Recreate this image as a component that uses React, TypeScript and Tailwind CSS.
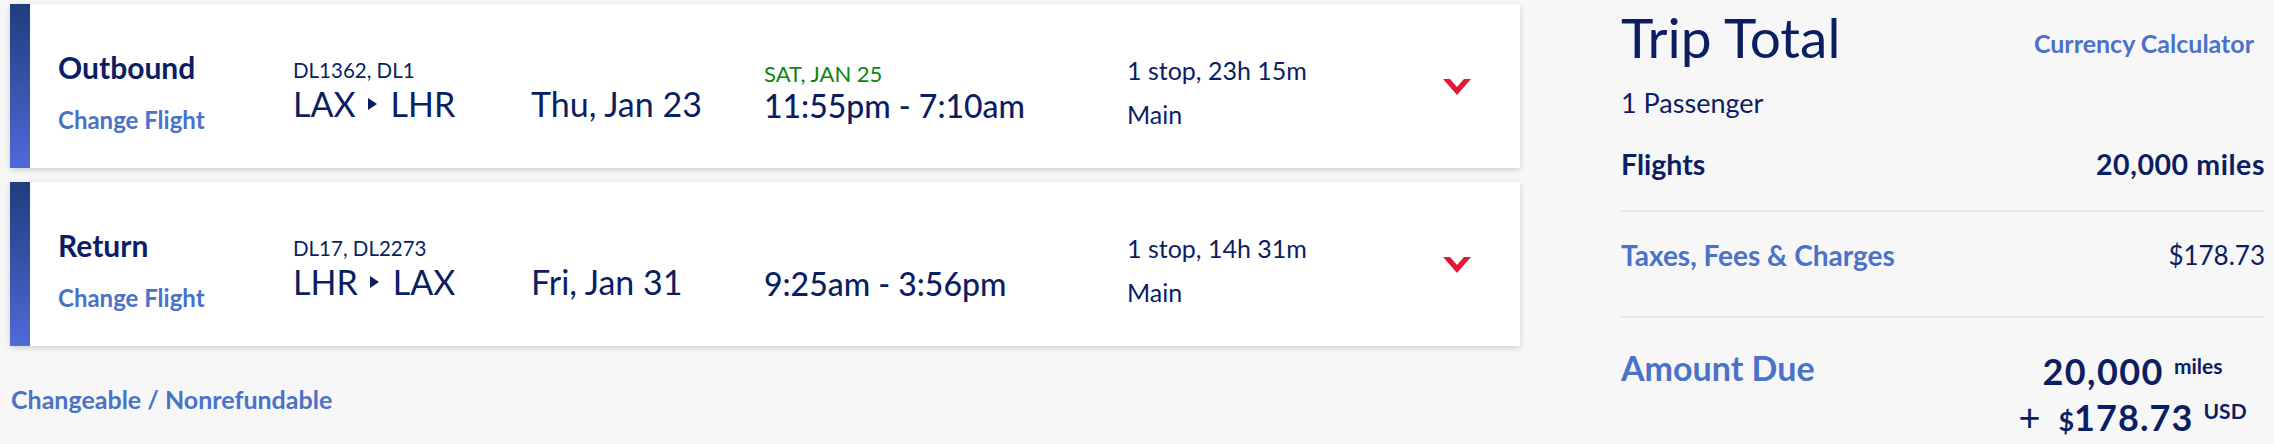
import React from "react";

const NAVY = "text-[#0b1e62]";

function Chevron() {
  return (
    <svg width="28" height="16" viewBox="0 0 28 16" className="block">
      <polygon points="0,0 7,0 14,8 21,0 28,0 14,16" fill="#e31837" />
    </svg>
  );
}

function Arrow() {
  return (
    <svg width="9" height="12" viewBox="0 0 9 12" className="block mx-[12px]">
      <polygon points="0,0 9,6 0,12" fill="#0b1e62" />
    </svg>
  );
}

type Leg = {
  label: string;
  codes: string;
  from: string;
  to: string;
  date: string;
  arrival?: string;
  time: string;
  stops: string;
};

function FlightCard({ leg }: { leg: Leg }) {
  return (
    <div className="flex h-[164px] bg-white shadow-[0_2px_6px_rgba(0,0,0,0.16)]">
      <div className="w-[20px] bg-linear-to-b from-[#1f3e7d] to-[#5069da]" />
      <div className="flex pl-[28px]">
        <div className="w-[235px] flex flex-col pt-[45px]">
          <div className={`text-[30px] leading-[36px] font-bold ${NAVY}`}>{leg.label}</div>
          <div className="mt-[20px] text-[24px] leading-[30px] font-bold text-[#4a72c8]">Change Flight</div>
        </div>
        <div className="w-[238px] flex flex-col pt-[54px]">
          <div className={`text-[20.5px] leading-[24px] ${NAVY}`}>{leg.codes}</div>
          <div className={`mt-[2px] flex items-center text-[34px] leading-[40px] ${NAVY}`}>
            <span>{leg.from}</span>
            <Arrow />
            <span className="ml-[2px]">{leg.to}</span>
          </div>
        </div>
        <div className={`w-[233px] pt-[80px] text-[34px] leading-[40px] ${NAVY}`}>{leg.date}</div>
        <div className="w-[363px] flex flex-col pt-[57px]">
          <div className="h-[26px] text-[22px] leading-[26px] text-[#0a870a]">{leg.arrival ?? ""}</div>
          <div className={`text-[32px] leading-[38px] font-medium ${NAVY}`}>{leg.time}</div>
        </div>
        <div className="w-[316px] flex flex-col pt-[51px]">
          <div className={`text-[25px] leading-[30px] ${NAVY}`}>{leg.stops}</div>
          <div className={`mt-[14px] text-[25px] leading-[30px] ${NAVY}`}>Main</div>
        </div>
        <div className="pt-[75px]">
          <Chevron />
        </div>
      </div>
    </div>
  );
}

const legs: Leg[] = [
  {
    label: "Outbound",
    codes: "DL1362, DL1",
    from: "LAX",
    to: "LHR",
    date: "Thu, Jan 23",
    arrival: "SAT, JAN 25",
    time: "11:55pm - 7:10am",
    stops: "1 stop, 23h 15m",
  },
  {
    label: "Return",
    codes: "DL17, DL2273",
    from: "LHR",
    to: "LAX",
    date: "Fri, Jan 31",
    time: "9:25am - 3:56pm",
    stops: "1 stop, 14h 31m",
  },
];

export default function App() {
  return (
    <div
      className="w-[2274px] h-[444px] bg-[#f7f7f8] flex overflow-hidden"
      style={{ fontFamily: "Lato, 'Noto Sans', sans-serif" }}
    >
      <div className="ml-[10px] mt-[4px] w-[1510px] flex flex-col">
        <div className="flex flex-col gap-[14px]">
          {legs.map((l) => (
            <FlightCard key={l.label} leg={l} />
          ))}
        </div>
        <div className="mt-[38px] pl-[1px] text-[25px] leading-[30px] font-bold text-[#4a72c8]">
          Changeable / Nonrefundable
        </div>
      </div>

      <div className={`ml-[101px] w-[644px] flex flex-col pt-[5px] ${NAVY}`}>
        <div className="flex justify-between items-start">
          <div className="text-[55px] leading-[64px]">Trip Total</div>
          <div className="mt-[24px] mr-[11px] text-[25px] leading-[28px] font-bold text-[#4a72c8]">
            Currency Calculator
          </div>
        </div>
        <div className="mt-[18px] text-[27px] leading-[32px]">1 Passenger</div>
        <div className="mt-[28px] flex justify-between text-[28.5px] leading-[34px] font-bold">
          <span>Flights</span>
          <span className="tracking-[0.02em]">20,000 miles</span>
        </div>
        <div className="mt-[29px] h-[2px] bg-[#e5e9f2]" />
        <div className="mt-[26px] flex justify-between text-[28px] leading-[34px]">
          <span className="font-bold text-[#4a72c8]">Taxes, Fees &amp; Charges</span>
          <span className="text-[26px]">$178.73</span>
        </div>
        <div className="mt-[44px] h-[2px] bg-[#e5e9f2]" />
        <div className="mt-[30px] flex justify-between items-start">
          <div className="text-[34px] leading-[40px] font-bold text-[#4a72c8]">Amount Due</div>
          <div className="mt-[1px] w-[265px] flex flex-col items-center font-bold">
            <div className="flex items-start h-[45px]">
              <span className="text-[36px] leading-[45px] tracking-[0.04em]">20,000</span>
              <span className="ml-[10px] mt-[6px] text-[21px] leading-[21px]">miles</span>
            </div>
            <div className="flex items-baseline">
              <span className="text-[38px] leading-[45px] font-normal">+</span>
              <span className="ml-[18px] text-[27px] leading-[45px]">$</span>
              <span className="text-[36px] leading-[45px] tracking-[0.03em]">178.73</span>
              <span className="self-start ml-[10px] mt-[6px] text-[21px] leading-[21px]">USD</span>
            </div>
          </div>
        </div>
      </div>
    </div>
  );
}
